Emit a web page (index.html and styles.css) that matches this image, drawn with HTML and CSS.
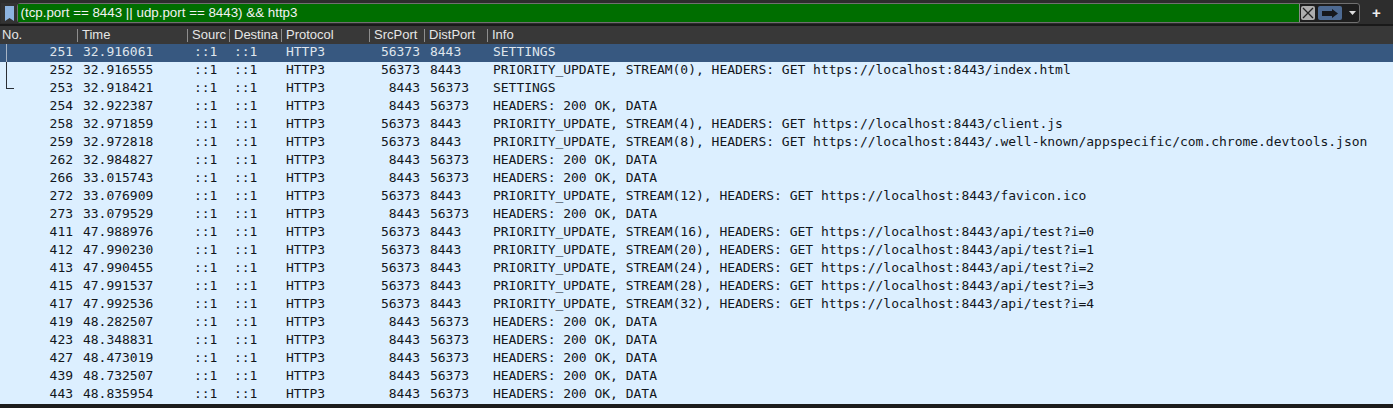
FILE: index.html
```html
<!DOCTYPE html>
<html lang="en">
<head>
<meta charset="utf-8">
<title>Wireshark packet list</title>
<link rel="stylesheet" href="styles.css">
</head>
<body>
<div class="filterbar">
  <div class="bookmark"><svg width="9" height="15" viewBox="0 0 9 15"><path d="M0 0H9V15L4.5 12 0 15Z" fill="#8db4e0"/></svg></div>
  <div class="filterbox">
    <div class="filtertext">(tcp.port == 8443 || udp.port == 8443) &amp;&amp; http3</div>
    <div class="clear"><svg width="12" height="12" viewBox="0 0 12 12"><path d="M1 1L11 11M11 1L1 11" stroke="#222" stroke-width="1.3" fill="none"/></svg></div>
    <div class="apply"><svg width="16" height="9" viewBox="0 0 16 9"><path d="M0 2H10V0L16 4.5 10 9V7H0Z" fill="#16181c"/></svg></div>
    <div class="drop"><svg width="7" height="4" viewBox="0 0 7 4"><path d="M0 0H7L3.5 4Z" fill="#ddd"/></svg></div>
  </div>
  <div class="plus">+</div>
</div>
<div class="header">
  <div class="h c-no">No.</div>
  <div class="h c-time sep">Time</div>
  <div class="h c-src sep">Sourc</div>
  <div class="h c-dst sep">Destina</div>
  <div class="h c-proto sep">Protocol</div>
  <div class="h c-sp sep">SrcPort</div>
  <div class="h c-dp sep">DistPort</div>
  <div class="h c-info sep">Info</div>
</div>
<div class="list">
  <div class="row selected"><span class="tree tree-start"></span><span class="c-no num">251</span><span class="c-time">32.916061</span><span class="c-src">::1</span><span class="c-dst">::1</span><span class="c-proto">HTTP3</span><span class="c-sp num">56373</span><span class="c-dp">8443</span><span class="c-info">SETTINGS</span></div>
  <div class="row"><span class="tree tree-mid"></span><span class="c-no num">252</span><span class="c-time">32.916555</span><span class="c-src">::1</span><span class="c-dst">::1</span><span class="c-proto">HTTP3</span><span class="c-sp num">56373</span><span class="c-dp">8443</span><span class="c-info">PRIORITY_UPDATE, STREAM(0), HEADERS: GET https://localhost:8443/index.html</span></div>
  <div class="row"><span class="tree tree-end"></span><span class="c-no num">253</span><span class="c-time">32.918421</span><span class="c-src">::1</span><span class="c-dst">::1</span><span class="c-proto">HTTP3</span><span class="c-sp num">8443</span><span class="c-dp">56373</span><span class="c-info">SETTINGS</span></div>
  <div class="row"><span class="c-no num">254</span><span class="c-time">32.922387</span><span class="c-src">::1</span><span class="c-dst">::1</span><span class="c-proto">HTTP3</span><span class="c-sp num">8443</span><span class="c-dp">56373</span><span class="c-info">HEADERS: 200 OK, DATA</span></div>
  <div class="row"><span class="c-no num">258</span><span class="c-time">32.971859</span><span class="c-src">::1</span><span class="c-dst">::1</span><span class="c-proto">HTTP3</span><span class="c-sp num">56373</span><span class="c-dp">8443</span><span class="c-info">PRIORITY_UPDATE, STREAM(4), HEADERS: GET https://localhost:8443/client.js</span></div>
  <div class="row"><span class="c-no num">259</span><span class="c-time">32.972818</span><span class="c-src">::1</span><span class="c-dst">::1</span><span class="c-proto">HTTP3</span><span class="c-sp num">56373</span><span class="c-dp">8443</span><span class="c-info">PRIORITY_UPDATE, STREAM(8), HEADERS: GET https://localhost:8443/.well-known/appspecific/com.chrome.devtools.json</span></div>
  <div class="row"><span class="c-no num">262</span><span class="c-time">32.984827</span><span class="c-src">::1</span><span class="c-dst">::1</span><span class="c-proto">HTTP3</span><span class="c-sp num">8443</span><span class="c-dp">56373</span><span class="c-info">HEADERS: 200 OK, DATA</span></div>
  <div class="row"><span class="c-no num">266</span><span class="c-time">33.015743</span><span class="c-src">::1</span><span class="c-dst">::1</span><span class="c-proto">HTTP3</span><span class="c-sp num">8443</span><span class="c-dp">56373</span><span class="c-info">HEADERS: 200 OK, DATA</span></div>
  <div class="row"><span class="c-no num">272</span><span class="c-time">33.076909</span><span class="c-src">::1</span><span class="c-dst">::1</span><span class="c-proto">HTTP3</span><span class="c-sp num">56373</span><span class="c-dp">8443</span><span class="c-info">PRIORITY_UPDATE, STREAM(12), HEADERS: GET https://localhost:8443/favicon.ico</span></div>
  <div class="row"><span class="c-no num">273</span><span class="c-time">33.079529</span><span class="c-src">::1</span><span class="c-dst">::1</span><span class="c-proto">HTTP3</span><span class="c-sp num">8443</span><span class="c-dp">56373</span><span class="c-info">HEADERS: 200 OK, DATA</span></div>
  <div class="row"><span class="c-no num">411</span><span class="c-time">47.988976</span><span class="c-src">::1</span><span class="c-dst">::1</span><span class="c-proto">HTTP3</span><span class="c-sp num">56373</span><span class="c-dp">8443</span><span class="c-info">PRIORITY_UPDATE, STREAM(16), HEADERS: GET https://localhost:8443/api/test?i=0</span></div>
  <div class="row"><span class="c-no num">412</span><span class="c-time">47.990230</span><span class="c-src">::1</span><span class="c-dst">::1</span><span class="c-proto">HTTP3</span><span class="c-sp num">56373</span><span class="c-dp">8443</span><span class="c-info">PRIORITY_UPDATE, STREAM(20), HEADERS: GET https://localhost:8443/api/test?i=1</span></div>
  <div class="row"><span class="c-no num">413</span><span class="c-time">47.990455</span><span class="c-src">::1</span><span class="c-dst">::1</span><span class="c-proto">HTTP3</span><span class="c-sp num">56373</span><span class="c-dp">8443</span><span class="c-info">PRIORITY_UPDATE, STREAM(24), HEADERS: GET https://localhost:8443/api/test?i=2</span></div>
  <div class="row"><span class="c-no num">415</span><span class="c-time">47.991537</span><span class="c-src">::1</span><span class="c-dst">::1</span><span class="c-proto">HTTP3</span><span class="c-sp num">56373</span><span class="c-dp">8443</span><span class="c-info">PRIORITY_UPDATE, STREAM(28), HEADERS: GET https://localhost:8443/api/test?i=3</span></div>
  <div class="row"><span class="c-no num">417</span><span class="c-time">47.992536</span><span class="c-src">::1</span><span class="c-dst">::1</span><span class="c-proto">HTTP3</span><span class="c-sp num">56373</span><span class="c-dp">8443</span><span class="c-info">PRIORITY_UPDATE, STREAM(32), HEADERS: GET https://localhost:8443/api/test?i=4</span></div>
  <div class="row"><span class="c-no num">419</span><span class="c-time">48.282507</span><span class="c-src">::1</span><span class="c-dst">::1</span><span class="c-proto">HTTP3</span><span class="c-sp num">8443</span><span class="c-dp">56373</span><span class="c-info">HEADERS: 200 OK, DATA</span></div>
  <div class="row"><span class="c-no num">423</span><span class="c-time">48.348831</span><span class="c-src">::1</span><span class="c-dst">::1</span><span class="c-proto">HTTP3</span><span class="c-sp num">8443</span><span class="c-dp">56373</span><span class="c-info">HEADERS: 200 OK, DATA</span></div>
  <div class="row"><span class="c-no num">427</span><span class="c-time">48.473019</span><span class="c-src">::1</span><span class="c-dst">::1</span><span class="c-proto">HTTP3</span><span class="c-sp num">8443</span><span class="c-dp">56373</span><span class="c-info">HEADERS: 200 OK, DATA</span></div>
  <div class="row"><span class="c-no num">439</span><span class="c-time">48.732507</span><span class="c-src">::1</span><span class="c-dst">::1</span><span class="c-proto">HTTP3</span><span class="c-sp num">8443</span><span class="c-dp">56373</span><span class="c-info">HEADERS: 200 OK, DATA</span></div>
  <div class="row"><span class="c-no num">443</span><span class="c-time">48.835954</span><span class="c-src">::1</span><span class="c-dst">::1</span><span class="c-proto">HTTP3</span><span class="c-sp num">8443</span><span class="c-dp">56373</span><span class="c-info">HEADERS: 200 OK, DATA</span></div>
</div>
</body>
</html>
```
FILE: styles.css
```css
* { box-sizing: border-box; }
html, body { margin: 0; padding: 0; }
body {
  width: 1393px;
  height: 408px;
  overflow: hidden;
  background: #1c1c1c;
  font-family: "Liberation Sans", Arial, sans-serif;
}
.filterbar {
  height: 26px;
  background: #2d2d2d;
  border-bottom: 2px solid #191919;
  padding-top: 3px;
  display: flex;
  align-items: flex-start;
}
.bookmark {
  width: 16px;
  height: 20px;
  margin-left: 1px;
  display: flex;
  align-items: center;
  justify-content: center;
  background: #333;
}
.bookmark svg { margin-top: 1px; }
.filterbox {
  flex: 1;
  height: 20px;
  display: flex;
  align-items: center;
  background: #1e1e1e;
  border: 1px solid #707070;
  border-radius: 3px;
}
.filtertext {
  flex: 1;
  height: 18px;
  line-height: 17px;
  background: #006e00;
  color: #f2f2f2;
  font-size: 13.35px;
  padding-left: 2.5px;
  border-right: 1px solid #8a8a8a;
}
.clear {
  width: 14px;
  height: 14px;
  margin-left: 1px;
  background: #aeaeae;
  border-radius: 2px;
  display: flex;
  align-items: center;
  justify-content: center;
}
.apply {
  width: 24px;
  height: 14px;
  margin-left: 3px;
  background: #4d6a92;
  border-radius: 2px;
  display: flex;
  align-items: center;
  justify-content: center;
}
.drop {
  width: 17px;
  height: 14px;
  padding-left: 3px;
  display: flex;
  align-items: center;
  justify-content: center;
}
.plus {
  width: 33px;
  flex: none;
  text-align: center;
  color: #eee;
  font-size: 15px;
  font-weight: 700;
  line-height: 19px;
}
.header {
  height: 18px;
  background: #383838;
  color: #e6e6e6;
  font-size: 13px;
  display: flex;
  align-items: center;
}
.h { height: 13px; line-height: 12px; white-space: nowrap; }
.h.sep { border-left: 1px solid #8e8e8e; padding-left: 4px; }
.h.c-no { padding-left: 2px; }
.c-no { width: 77px; flex: none; }
.c-time { width: 110px; flex: none; }
.c-src { width: 42px; flex: none; }
.c-dst { width: 52px; flex: none; }
.c-proto { width: 88px; flex: none; }
.c-sp { width: 55px; flex: none; }
.c-dp { width: 63px; flex: none; }
.c-info { flex: 1; white-space: nowrap; }
.list { background: #dcefff; height: 360px; }
.row {
  position: relative;
  height: 18px;
  padding-bottom: 2px;
  display: flex;
  align-items: center;
  font-family: "DejaVu Sans Mono", monospace;
  font-size: 13px;
  letter-spacing: -0.02px;
  line-height: 16px;
  color: #12161c;
  background: #dcefff;
  white-space: pre;
}
.row.selected { background: #375880; color: #dfe5ec; }
.row .c-no { width: 73px; text-align: right; }
.row .c-time { margin-left: 10px; width: 111px; }
.row .c-src { width: 40px; }
.row .c-dst { width: 52px; }
.row .c-proto { width: 88px; }
.row .c-sp { width: 46px; text-align: right; }
.row .c-dp { margin-left: 10px; width: 63px; }
.tree {
  position: absolute;
  left: 6px;
  width: 8px;
  border-left: 1px solid #2a2f36;
}
.tree-start { top: 0; height: 18px; border-left-color: #a8b4c4; }
.tree-mid { top: 0; height: 18px; }
.tree-end { top: 0; height: 9px; border-bottom: 1px solid #2a2f36; }
```
